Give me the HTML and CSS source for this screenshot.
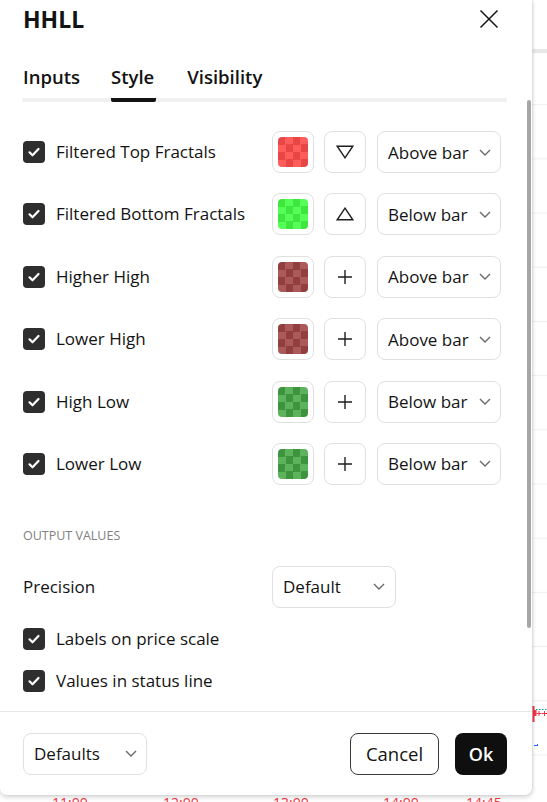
FILE: index.html
```html
<!DOCTYPE html>
<html lang="en">
<head>
<meta charset="utf-8">
<title>HHLL</title>
<link rel="stylesheet" href="styles.css">
</head>
<body>
<div class="chart">
  <div class="chart-band"></div>
  <svg class="marks" width="15" height="50" viewBox="0 0 15 50">
    <line x1="1.5" y1="6" x2="1.5" y2="22" stroke="#f23645" stroke-width="2"/>
    <rect x="1" y="10" width="3.5" height="6" fill="#f23645"/>
    <line x1="4" y1="9.5" x2="15" y2="9.5" stroke="#089981" stroke-width="1" stroke-dasharray="1.5 1.5"/>
    <path d="M4.5 13.5h5M7 11v5M10 13.5h5M12.5 11v5" stroke="#f23645" stroke-width="1" fill="none"/>
    <path d="M2 45.5h4M5.5 44v2" stroke="#2962ff" stroke-width="1" fill="none"/>
  </svg>
  <div class="time-axis">
    <span class="t t1">11:00</span>
    <span class="t t2">12:00</span>
    <span class="t t3">13:00</span>
    <span class="t t4">14:00</span>
    <span class="t t5">14:45</span>
  </div>
</div>

<div class="dialog">
  <header class="dlg-head">
    <h1 class="title">HHLL</h1>
    <span class="close">
      <svg width="20" height="20" viewBox="0 0 20 20"><path d="M1.5 1.5l17 17M18.5 1.5l-17 17" stroke="#131313" stroke-width="1.5" fill="none"/></svg>
    </span>
  </header>

  <nav class="tabs">
    <span class="tab">Inputs</span>
    <span class="tab active">Style</span>
    <span class="tab">Visibility</span>
  </nav>

  <div class="content">
    <div class="rows">
      <div class="row">
        <label class="opt"><span class="cb"><svg width="14" height="14" viewBox="0 0 14 14"><path d="M2.5 7.3l3 3 6-6.3" stroke="#fff" stroke-width="2.2" fill="none" stroke-linecap="round" stroke-linejoin="round"/></svg></span><span>Filtered Top Fractals</span></label>
        <span class="swatch-btn"><span class="swatch red"></span></span>
        <span class="shape-btn"><svg width="18" height="14" viewBox="0 0 18 14"><path d="M1.2 1.2h15.6L9 12.8z" stroke="#1e1e1e" stroke-width="1.4" fill="none" stroke-linejoin="miter"/></svg></span>
        <span class="select"><span>Above bar</span><svg class="chev" width="12" height="7" viewBox="0 0 12 7"><path d="M1 1l5 5 5-5" stroke="#6a6a6a" stroke-width="1.4" fill="none"/></svg></span>
      </div>
      <div class="row">
        <label class="opt"><span class="cb"><svg width="14" height="14" viewBox="0 0 14 14"><path d="M2.5 7.3l3 3 6-6.3" stroke="#fff" stroke-width="2.2" fill="none" stroke-linecap="round" stroke-linejoin="round"/></svg></span><span>Filtered Bottom Fractals</span></label>
        <span class="swatch-btn"><span class="swatch green"></span></span>
        <span class="shape-btn"><svg width="18" height="14" viewBox="0 0 18 14"><path d="M1.2 12.8h15.6L9 1.2z" stroke="#1e1e1e" stroke-width="1.4" fill="none" stroke-linejoin="miter"/></svg></span>
        <span class="select"><span>Below bar</span><svg class="chev" width="12" height="7" viewBox="0 0 12 7"><path d="M1 1l5 5 5-5" stroke="#6a6a6a" stroke-width="1.4" fill="none"/></svg></span>
      </div>
      <div class="row">
        <label class="opt"><span class="cb"><svg width="14" height="14" viewBox="0 0 14 14"><path d="M2.5 7.3l3 3 6-6.3" stroke="#fff" stroke-width="2.2" fill="none" stroke-linecap="round" stroke-linejoin="round"/></svg></span><span>Higher High</span></label>
        <span class="swatch-btn"><span class="swatch darkred"></span></span>
        <span class="shape-btn"><svg width="16" height="16" viewBox="0 0 16 16"><path d="M8 1v14M1 8h14" stroke="#1e1e1e" stroke-width="1.4" fill="none"/></svg></span>
        <span class="select"><span>Above bar</span><svg class="chev" width="12" height="7" viewBox="0 0 12 7"><path d="M1 1l5 5 5-5" stroke="#6a6a6a" stroke-width="1.4" fill="none"/></svg></span>
      </div>
      <div class="row">
        <label class="opt"><span class="cb"><svg width="14" height="14" viewBox="0 0 14 14"><path d="M2.5 7.3l3 3 6-6.3" stroke="#fff" stroke-width="2.2" fill="none" stroke-linecap="round" stroke-linejoin="round"/></svg></span><span>Lower High</span></label>
        <span class="swatch-btn"><span class="swatch darkred"></span></span>
        <span class="shape-btn"><svg width="16" height="16" viewBox="0 0 16 16"><path d="M8 1v14M1 8h14" stroke="#1e1e1e" stroke-width="1.4" fill="none"/></svg></span>
        <span class="select"><span>Above bar</span><svg class="chev" width="12" height="7" viewBox="0 0 12 7"><path d="M1 1l5 5 5-5" stroke="#6a6a6a" stroke-width="1.4" fill="none"/></svg></span>
      </div>
      <div class="row">
        <label class="opt"><span class="cb"><svg width="14" height="14" viewBox="0 0 14 14"><path d="M2.5 7.3l3 3 6-6.3" stroke="#fff" stroke-width="2.2" fill="none" stroke-linecap="round" stroke-linejoin="round"/></svg></span><span>High Low</span></label>
        <span class="swatch-btn"><span class="swatch darkgreen"></span></span>
        <span class="shape-btn"><svg width="16" height="16" viewBox="0 0 16 16"><path d="M8 1v14M1 8h14" stroke="#1e1e1e" stroke-width="1.4" fill="none"/></svg></span>
        <span class="select"><span>Below bar</span><svg class="chev" width="12" height="7" viewBox="0 0 12 7"><path d="M1 1l5 5 5-5" stroke="#6a6a6a" stroke-width="1.4" fill="none"/></svg></span>
      </div>
      <div class="row">
        <label class="opt"><span class="cb"><svg width="14" height="14" viewBox="0 0 14 14"><path d="M2.5 7.3l3 3 6-6.3" stroke="#fff" stroke-width="2.2" fill="none" stroke-linecap="round" stroke-linejoin="round"/></svg></span><span>Lower Low</span></label>
        <span class="swatch-btn"><span class="swatch darkgreen"></span></span>
        <span class="shape-btn"><svg width="16" height="16" viewBox="0 0 16 16"><path d="M8 1v14M1 8h14" stroke="#1e1e1e" stroke-width="1.4" fill="none"/></svg></span>
        <span class="select"><span>Below bar</span><svg class="chev" width="12" height="7" viewBox="0 0 12 7"><path d="M1 1l5 5 5-5" stroke="#6a6a6a" stroke-width="1.4" fill="none"/></svg></span>
      </div>
    </div>

    <div class="section-title">OUTPUT VALUES</div>

    <div class="row prec">
      <span class="opt">Precision</span>
      <span class="select"><span>Default</span><svg class="chev" width="12" height="7" viewBox="0 0 12 7"><path d="M1 1l5 5 5-5" stroke="#6a6a6a" stroke-width="1.4" fill="none"/></svg></span>
    </div>

    <label class="check-row first"><span class="cb"><svg width="14" height="14" viewBox="0 0 14 14"><path d="M2.5 7.3l3 3 6-6.3" stroke="#fff" stroke-width="2.2" fill="none" stroke-linecap="round" stroke-linejoin="round"/></svg></span><span>Labels on price scale</span></label>
    <label class="check-row"><span class="cb"><svg width="14" height="14" viewBox="0 0 14 14"><path d="M2.5 7.3l3 3 6-6.3" stroke="#fff" stroke-width="2.2" fill="none" stroke-linecap="round" stroke-linejoin="round"/></svg></span><span>Values in status line</span></label>
  </div>

  <div class="scroll-thumb"></div>

  <footer class="dlg-foot">
    <span class="select defaults"><span>Defaults</span><svg class="chev" width="12" height="7" viewBox="0 0 12 7"><path d="M1 1l5 5 5-5" stroke="#6a6a6a" stroke-width="1.4" fill="none"/></svg></span>
    <div class="actions">
      <button class="btn cancel">Cancel</button>
      <button class="btn ok">Ok</button>
    </div>
  </footer>
</div>
</body>
</html>
```

FILE: styles.css
```css
* { box-sizing: border-box; }

html, body {
  margin: 0;
  padding: 0;
}

body {
  width: 547px;
  height: 802px;
  position: relative;
  overflow: hidden;
  background: #ffffff;
  font-family: "Open Sans", "Noto Sans", sans-serif;
  color: #131313;
}

/* ---------- chart behind the dialog ---------- */
.chart {
  position: absolute;
  inset: 0;
  background-image: linear-gradient(to bottom, #efefef 0 1px, transparent 1px);
  background-size: 100% 54.2px;
  background-position: 0 50px;
}

.chart-band {
  position: absolute;
  left: 533px;
  top: 49px;
  width: 14px;
  height: 4px;
  background: #e8e8e8;
}

.marks {
  position: absolute;
  left: 532px;
  top: 700px;
}

.time-axis {
  position: absolute;
  left: 0;
  right: 0;
  top: 796px;
  height: 20px;
  background: #fff;
}

.t {
  position: absolute;
  top: 0;
  font-size: 14px;
  line-height: 14px;
  color: #f23645;
}
.t1 { left: 52px; }
.t2 { left: 163px; }
.t3 { left: 273px; }
.t4 { left: 383px; }
.t5 { left: 466px; }

/* ---------- dialog ---------- */
.dialog {
  position: absolute;
  left: 0;
  top: 0;
  width: 532px;
  height: 795px;
  background: #ffffff;
  border-radius: 0 0 7px 7px;
  box-shadow: 0 2px 5px rgba(0, 0, 0, 0.18), 1px 0 2px rgba(0, 0, 0, 0.08);
  display: flex;
  flex-direction: column;
}

.dlg-head {
  height: 38px;
  flex-shrink: 0;
  display: flex;
  align-items: center;
  justify-content: space-between;
  padding: 0 33px 0 23px;
}

.title {
  margin: 0;
  font-size: 23px;
  line-height: 28px;
  font-weight: 700;
  color: #131313;
}

.close {
  display: flex;
  width: 20px;
  height: 20px;
}

.tabs {
  flex-shrink: 0;
  display: flex;
  gap: 31px;
  margin: 0 25px 0 22px;
  padding-left: 1px;
  background: linear-gradient(#f0f0f0, #f0f0f0) left bottom / 100% 4px no-repeat;
  border-radius: 2px;
}

.tab {
  padding: 29px 0 11px;
  border-bottom: 4px solid transparent;
  border-radius: 2px;
  font-size: 18.5px;
  line-height: 20px;
  font-weight: 600;
  color: #131313;
}

.tab.active {
  border-bottom-color: #131313;
  padding-right: 2px;
}

.content {
  flex: 1;
  overflow: hidden;
  padding: 29px 25px 0 23px;
}

.rows {
  display: flex;
  flex-direction: column;
  gap: 20.4px;
}

.row {
  display: flex;
  align-items: center;
  height: 42px;
}

.opt {
  width: 249px;
  flex-shrink: 0;
  display: flex;
  align-items: center;
  gap: 11px;
  font-size: 17px;
  line-height: 22px;
  white-space: nowrap;
}

.cb {
  width: 22px;
  height: 22px;
  flex-shrink: 0;
  border-radius: 4px;
  background: #2e2e2e;
  display: flex;
  align-items: center;
  justify-content: center;
}

.swatch-btn,
.shape-btn {
  width: 42px;
  height: 42px;
  flex-shrink: 0;
  border: 1px solid #e0e0e0;
  border-radius: 8px;
  display: flex;
  align-items: center;
  justify-content: center;
}

.swatch-btn { margin-right: 10px; }
.shape-btn { margin-right: 11px; }

.swatch {
  width: 30px;
  height: 30px;
  border-radius: 4px;
  background-size: 15px 15px;
}

.swatch.red { background-image: repeating-conic-gradient(#ff5c5c 0 25%, #e84646 0 50%); }
.swatch.green { background-image: repeating-conic-gradient(#55ff55 0 25%, #3ee63e 0 50%); }
.swatch.darkred { background-image: repeating-conic-gradient(#ab5a5a 0 25%, #933e3e 0 50%); }
.swatch.darkgreen { background-image: repeating-conic-gradient(#5cb35c 0 25%, #3e943e 0 50%); }

.select {
  width: 124px;
  height: 42px;
  flex-shrink: 0;
  border: 1px solid #e0e0e0;
  border-radius: 8px;
  display: flex;
  align-items: center;
  justify-content: space-between;
  padding: 0 9px 0 10px;
  font-size: 17px;
  color: #131313;
  white-space: nowrap;
}

.chev { flex-shrink: 0; }

.section-title {
  margin-top: 43px;
  font-size: 12.5px;
  line-height: 16px;
  color: #808080;
}

.prec {
  margin-top: 22px;
}

.prec .select { padding-right: 10px; }

.check-row {
  display: flex;
  align-items: center;
  gap: 11px;
  height: 22px;
  margin-top: 20px;
  font-size: 17px;
  line-height: 22px;
}

.scroll-thumb {
  position: absolute;
  top: 100px;
  right: 1px;
  width: 4px;
  height: 528px;
  border-radius: 2px;
  background: #a6a6a6;
}

.dlg-foot {
  height: 84px;
  flex-shrink: 0;
  border-top: 1px solid #e6e6e6;
  display: flex;
  align-items: center;
  justify-content: space-between;
  padding: 0 25px 0 23px;
}

.actions {
  display: flex;
  gap: 16px;
}

.btn {
  height: 42px;
  border-radius: 8px;
  font-family: "Open Sans", "Noto Sans", sans-serif;
  cursor: pointer;
}

.btn.cancel {
  width: 89px;
  border: 1px solid #3a3a3a;
  background: #ffffff;
  color: #131313;
  font-size: 18.5px;
  font-weight: 400;
}

.btn.ok {
  width: 52px;
  border: none;
  background: #0f0f0f;
  color: #ffffff;
  font-size: 18px;
  font-weight: 600;
}
```
